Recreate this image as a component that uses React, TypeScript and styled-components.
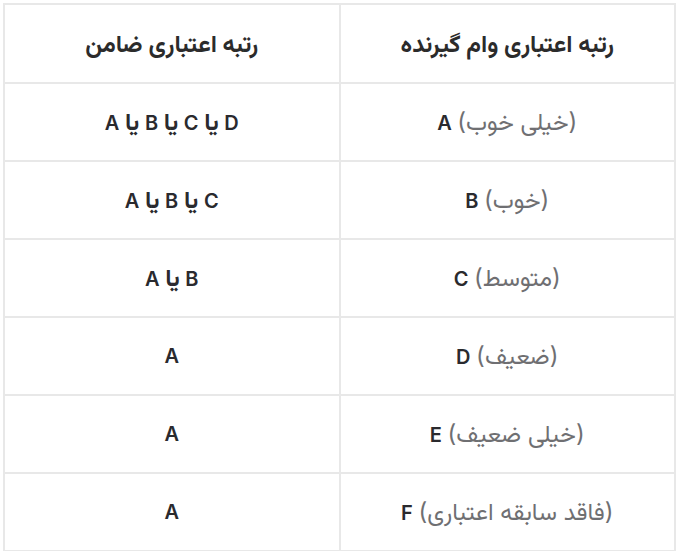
import styled, { createGlobalStyle } from "styled-components";

const GlobalStyle = createGlobalStyle`
 html, body {
  margin: 0;
  padding: 0;
  background: #ffffff;
 }
 body {
  font-family: "Inter", "Vazirmatn", "Noto Sans Arabic", "DejaVu Sans", sans-serif;
 }
`;

interface IRow {
 borrower: string;
 label: string;
 guarantors: string[];
}

const rows: IRow[] = [
 { borrower: "A", label: "خیلی خوب", guarantors: ["D", "C", "B", "A"] },
 { borrower: "B", label: "خوب", guarantors: ["C", "B", "A"] },
 { borrower: "C", label: "متوسط", guarantors: ["B", "A"] },
 { borrower: "D", label: "ضعیف", guarantors: ["A"] },
 { borrower: "E", label: "خیلی ضعیف", guarantors: ["A"] },
 { borrower: "F", label: "فاقد سابقه اعتباری", guarantors: ["A"] },
];

const App = () => {
 return (
  <Page>
   <GlobalStyle />
   <Table dir="rtl">
    <thead>
     <tr>
      <HeadCell>رتبه اعتباری وام گیرنده</HeadCell>
      <HeadCell>رتبه اعتباری ضامن</HeadCell>
     </tr>
    </thead>
    <tbody>
     {rows.map((row) => (
      <tr key={row.borrower}>
       <Cell>
        <Muted>({row.label})</Muted> <Grade>{row.borrower}</Grade>
       </Cell>
       <Cell>
        {row.guarantors.map((g, i) => (
         <span key={g}>
          {i > 0 && <Or> یا </Or>}
          <Grade>{g}</Grade>
         </span>
        ))}
       </Cell>
      </tr>
     ))}
    </tbody>
   </Table>
  </Page>
 );
};

export default App;

const Page = styled.div`
 padding: 3px 4px 0 3px;
`;

const Table = styled.table`
 width: 673px;
 border-collapse: collapse;
 table-layout: fixed;
 background: #ffffff;

 th,
 td {
  border: 2px solid #e8e8e8;
 }
`;

const HeadCell = styled.th`
 height: 77px;
 padding: 0;
 text-align: center;
 vertical-align: middle;
 font-size: 24px;
 line-height: 30px;
 font-weight: 700;
 color: #2b2b2b;
`;

const Cell = styled.td`
 height: 76px;
 padding: 0;
 text-align: center;
 vertical-align: middle;
 font-size: 20px;
 line-height: 30px;
`;

const Muted = styled.span`
 color: #6f6f72;
 font-size: 24px;
 font-weight: 400;
`;

const Or = styled.span`
 color: #2a2a2e;
 font-size: 24px;
 font-weight: 700;
`;

const Grade = styled.span`
 color: #2a2a2e;
 font-weight: 600;
`;
